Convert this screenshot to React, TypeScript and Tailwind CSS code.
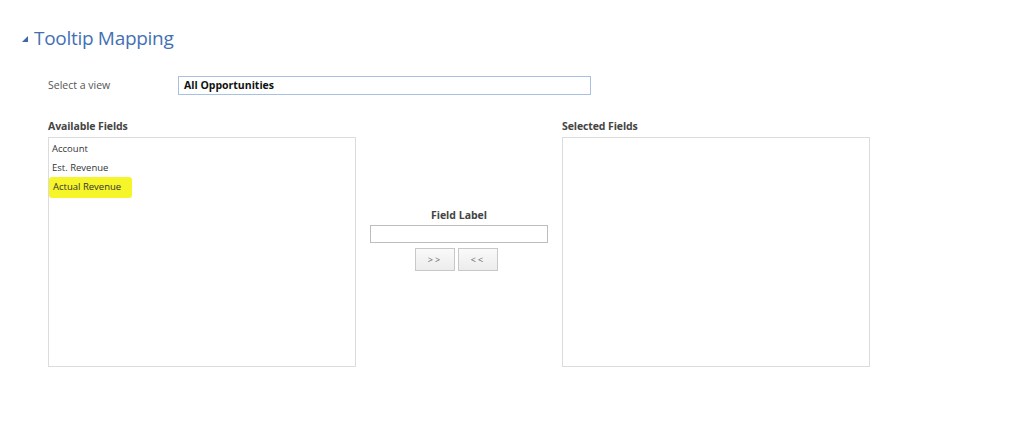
import React from "react";

const fields = ["Account", "Est. Revenue", "Actual Revenue"];

const App: React.FC = () => {
  return (
    <div className="w-[1024px] h-[423px] bg-white font-['Open_Sans',sans-serif] text-[#444] pl-[22px] pt-[26px]">
      {/* Header */}
      <div className="flex items-center gap-[6px]">
        <svg width="6" height="6" viewBox="0 0 6 6" className="mt-[1px]">
          <polygon points="0,6 6,0 6,6" fill="#3f67a8" />
        </svg>
        <h2 className="text-[19px] leading-[25px] text-[#4470b3] font-normal tracking-[-0.3px]">Tooltip Mapping</h2>
      </div>

      <div className="ml-[26px]">
        {/* Select view */}
        <div className="flex items-center mt-[25px] h-[19px]">
          <span className="w-[130px] text-[10.5px] text-[#555]">Select a view</span>
          <div className="w-[413px] h-[19px] border border-[#a8c1e0] flex items-center px-[5px] text-[10.5px] font-bold text-[#111]">
            All Opportunities
          </div>
        </div>

        {/* Fields */}
        <div className="flex gap-[14px] mt-[24px]">
          {/* Available */}
          <div className="w-[308px]">
            <h3 className="text-[10.5px] font-bold text-[#444] leading-[15px] mb-[3px] tracking-[-0.1px]">Available Fields</h3>
            <div className="h-[230px] border border-[#dcdcdc] pt-[2px]">
              {fields.map((f, idx) => (
                <div key={f} className="h-[19px] flex items-center">
                  {idx === 2 ? (
                    <span className="bg-[#f5f52a] rounded-[3px] pl-[4px] pr-[11px] py-[3px] text-[9.5px] text-[#333]">{f}</span>
                  ) : (
                    <span className="pl-[3px] text-[9.5px] text-[#333]">{f}</span>
                  )}
                </div>
              ))}
            </div>
          </div>

          {/* Middle */}
          <div className="w-[178px] pt-[89px] flex flex-col items-center">
            <span className="text-[10.5px] font-bold text-[#444] leading-[15px]">Field Label</span>
            <div className="w-[178px] h-[18px] border border-[#bdbdbd] mt-[2px]"></div>
            <div className="flex gap-[3px] mt-[5px] pr-[5px]">
              <button className="w-[40px] h-[23px] border border-[#c8c8c8] bg-gradient-to-b from-[#fafafa] to-[#ececec] text-[9px] text-[#666] tracking-[2px]">&gt;&gt;</button>
              <button className="w-[40px] h-[23px] border border-[#c8c8c8] bg-gradient-to-b from-[#fafafa] to-[#ececec] text-[9px] text-[#666] tracking-[2px]">&lt;&lt;</button>
            </div>
          </div>

          {/* Selected */}
          <div className="w-[308px]">
            <h3 className="text-[10.5px] font-bold text-[#444] leading-[15px] mb-[3px] tracking-[-0.1px]">Selected Fields</h3>
            <div className="h-[230px] border border-[#dcdcdc]"></div>
          </div>
        </div>
      </div>
    </div>
  );
};

export default App;
